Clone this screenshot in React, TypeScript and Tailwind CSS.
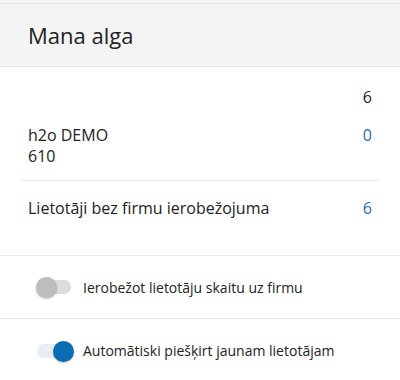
import { useState } from "react";

function Toggle({ on, onClick }: { on: boolean; onClick: () => void }) {
  return (
    <button onClick={onClick} className="relative w-[36px] h-[20px] flex items-center shrink-0">
      <span className={`block w-[34px] h-[14px] rounded-full ${on ? "bg-[#e8edf1]" : "bg-[#dcdcdc]"}`} />
      <span
        className={`absolute top-0 w-[21px] h-[21px] rounded-full shadow-[0_1px_2px_rgba(0,0,0,0.25)] ${
          on ? "left-[16px] bg-[#0a6cb3]" : "left-[-1px] bg-[#bdbdbd]"
        }`}
      />
    </button>
  );
}

export default function App() {
  const [limit, setLimit] = useState(false);
  const [auto, setAuto] = useState(true);

  return (
    <div className="w-[400px] h-[380px] bg-white text-[#222] overflow-hidden" style={{ fontFamily: '"Open Sans", sans-serif' }}>
      <div className="bg-[#f4f4f4] pt-[3px]">
        <div className="border-t border-[#e6e6e6] border-b h-[64px] flex items-center px-[28px]">
          <h1 className="text-[22px] text-[#222]">Mana alga</h1>
        </div>
      </div>

      <div className="px-[21px] pt-[19px] pb-[36px] border-b border-[#ececec] text-[16px] leading-[21px]">
        <div className="flex justify-end px-[7px] h-[22px] items-center">6</div>
        <div className="flex justify-between px-[7px] pt-[17px] pb-[13px] border-b border-[#ececec]">
          <div>
            <div>h2o DEMO</div>
            <div>610</div>
          </div>
          <span className="text-[#2a6daf]">0</span>
        </div>
        <div className="flex justify-between px-[7px] pt-[17px]">
          <span>Lietotāji bez firmu ierobežojuma</span>
          <span className="text-[#2a6daf]">6</span>
        </div>
      </div>

      <div className="flex items-center gap-[10px] pl-[37px] h-[63px] border-b border-[#ececec] text-[14px]">
        <Toggle on={limit} onClick={() => setLimit(!limit)} />
        <span>Ierobežot lietotāju skaitu uz firmu</span>
      </div>
      <div className="flex items-center gap-[10px] pl-[37px] h-[63px] text-[14px]">
        <Toggle on={auto} onClick={() => setAuto(!auto)} />
        <span>Automātiski piešķirt jaunam lietotājam</span>
      </div>
    </div>
  );
}
